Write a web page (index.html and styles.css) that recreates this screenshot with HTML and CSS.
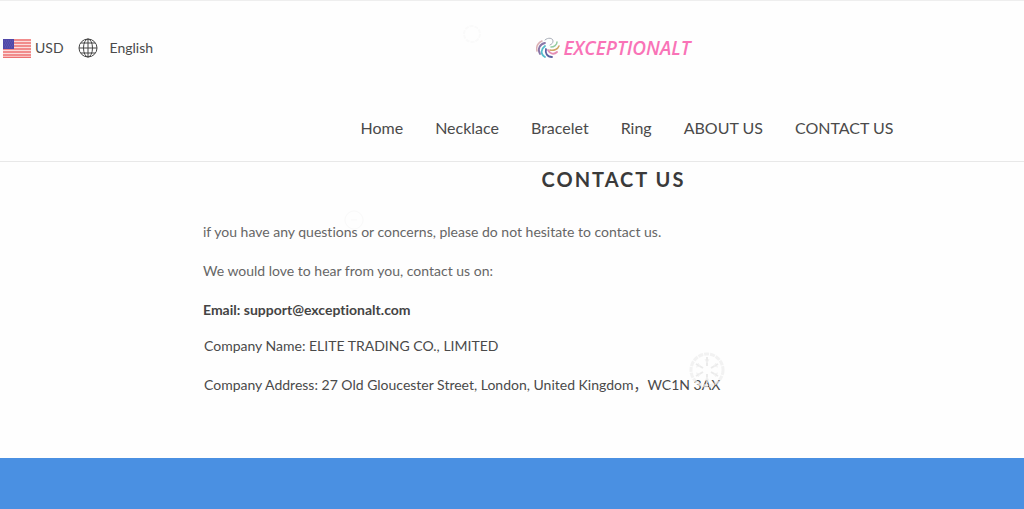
FILE: index.html
```html
<!DOCTYPE html>
<html lang="en">
<head>
  <meta charset="UTF-8">
  <meta name="viewport" content="width=device-width, initial-scale=1">
  <title>Contact Us</title>
  <link rel="stylesheet" href="styles.css">
</head>
<body>

  <header class="header">
    <div class="top-bar">
      <div class="switchers">
        <button class="switcher currency">
          <svg class="flag" viewBox="0 0 28 19" aria-hidden="true">
            <rect width="28" height="19" rx="1" fill="#fbdedd"/>
            <path d="M0 1h28M0 4h28M0 7h28M0 10h28M0 13h28M0 16h28M0 18.500h28" stroke="#ee7172" stroke-width="1.500"/>
            <rect width="11" height="10" fill="#5048a8"/>
            <path d="M1 2h9M2 4h8M1 6h9M2 8h8" stroke="#7770c0" stroke-width=".6" stroke-dasharray="1 1"/>
          </svg>
          <span>USD</span>
        </button>
        <button class="switcher language">
          <svg class="globe" viewBox="0 0 20 20" fill="none" stroke="#444" aria-hidden="true">
            <circle cx="10" cy="10" r="9"/>
            <ellipse cx="10" cy="10" rx="4.500" ry="9"/>
            <path d="M10 1v18M1 10h18M3 5h14M3 15h14"/>
          </svg>
          <span>English</span>
        </button>
      </div>
      <a class="logo" href="#">
        <svg class="swirl" viewBox="0 0 24 22" fill="none" stroke-linecap="round" aria-hidden="true">
          <path d="M6 4C2 6 0 10 1 14" stroke="#dcb0b4" stroke-width="1.500"/>
          <path d="M9 6C4 7 1 12 4 17" stroke="#8a76a8" stroke-width="1.800"/>
          <path d="M9 9c-4 3-5 8 0 11" stroke="#55bccb" stroke-width="1.800"/>
          <path d="M10 12c-1 4 1 8 6 8" stroke="#5960a0" stroke-width="1.800"/>
          <path d="M12 13c2 4 6 5 9 2" stroke="#e58fb5" stroke-width="1.800"/>
          <path d="M14 13c4 1 8-1 9-4" stroke="#cfa564" stroke-width="1.500"/>
          <path d="M15 10c3 0 6-2 6-5" stroke="#93cba0" stroke-width="1.500"/>
          <path d="M9 3c3-3 8-2 8 1 0 2-1 3-3 4" stroke="#a9aeb8" stroke-width="1"/>
        </svg>
        <span>EXCEPTIONALT</span>
      </a>
    </div>

    <nav class="nav">
      <a href="#">Home</a>
      <a href="#">Necklace</a>
      <a href="#">Bracelet</a>
      <a href="#">Ring</a>
      <a href="#">ABOUT US</a>
      <a href="#">CONTACT US</a>
    </nav>
  </header>

  <main class="content">
    <h1>CONTACT US</h1>
    <p>if you have any questions or concerns, please do not hesitate to contact us.</p>
    <p>We would love to hear from you, contact us on:</p>
    <p class="email">Email: support@exceptionalt.com</p>
    <div class="company">
      <p>Company Name: ELITE TRADING CO., LIMITED</p>
      <p>Company Address: 27 Old Gloucester Street, London, United Kingdom，WC1N 3AX</p>
    </div>
  </main>

  <footer class="footer"></footer>

  <!-- falling snow -->
  <svg class="snow snow-large" viewBox="0 0 36 36" fill="none" stroke="#eee" aria-hidden="true">
    <circle cx="18" cy="18" r="16" stroke-width="3" stroke-dasharray="5 1"/>
    <path d="M18 14V5M18 22v9M14 16L7 12M22 20l7 4M14 20l-7 4M22 16l7-4" stroke="#e4e4e4" stroke-width="2"/>
    <path d="M16 7l2 4 2-4M16 29l2-4 2 4M7 15l4-1-2-3M29 21l-4 1 2 3M7 21l4 1-2 3M29 15l-4-1 2-3"/>
  </svg>
  <svg class="snow snow-top" viewBox="0 0 20 20" fill="none" stroke="#fafafa" aria-hidden="true">
    <circle cx="10" cy="10" r="8" stroke-width="2" stroke-dasharray="4 1"/>
  </svg>
  <svg class="snow snow-left" viewBox="0 0 20 20" fill="none" stroke="#f9f9f9" aria-hidden="true">
    <circle cx="10" cy="10" r="9"/>
    <path d="M7 10h6"/>
  </svg>

</body>
</html>
```

FILE: styles.css
```css
* {
  box-sizing: border-box;
}

body {
  margin: 0;
  min-height: 100vh;
  display: flex;
  flex-direction: column;
  position: relative;
  background: #fefefe;
  color: #4a4a4a;
  font-family: Lato, "Noto Sans CJK SC", sans-serif;
  font-size: 14px;
  font-variant-ligatures: none;
  line-height: 20px;
}

a {
  color: inherit;
  text-decoration: none;
}

.header {
  border-top: 1px solid #eee;
  border-bottom: 1px solid #e8e8e8;
}

.top-bar {
  display: grid;
  grid-template-columns: 203px 1fr;
  align-items: center;
  height: 94px;
}

.switchers {
  display: flex;
  gap: 14px;
  padding-left: 3px;
}

.switcher {
  display: flex;
  align-items: center;
  padding: 0;
  border: none;
  background: none;
  color: inherit;
  font: inherit;
  cursor: pointer;
}

.currency {
  gap: 4px;
}

.language {
  gap: 12px;
}

.flag {
  width: 28px;
  height: 19px;
}

.globe {
  width: 20px;
  height: 20px;
}

.logo {
  display: flex;
  align-items: center;
  justify-self: center;
  gap: 3px;
  color: #f973b7;
  font-family: "Open Sans", sans-serif;
  font-size: 19px;
  font-style: italic;
  font-weight: 600;
}

.swirl {
  width: 24px;
  height: 22px;
}

.nav {
  display: flex;
  justify-content: center;
  gap: 32px;
  padding: 22px 0 22px 230px;
  font-size: 16px;
  line-height: 22px;
}

.content {
  flex: 1;
  padding-left: 203px;
}

.content h1 {
  margin: 5px 0 31px;
  color: #3a3a3a;
  font-size: 20px;
  line-height: 24px;
  letter-spacing: 2px;
  text-align: center;
}

.content p {
  margin: 0 0 19px;
  color: #666;
}

.content .email {
  margin-bottom: 16px;
  color: #444;
  font-weight: bold;
}

.content .company p {
  padding-left: 1px;
  color: #4a4a4a;
}

.footer {
  height: 51px;
  background: #4a90e2;
}

.snow {
  position: absolute;
  pointer-events: none;
}

.snow-large {
  top: 352px;
  left: 689px;
  width: 36px;
  opacity: 0.7;
}

.snow-top {
  top: 24px;
  left: 462px;
  width: 20px;
}

.snow-left {
  top: 210px;
  left: 344px;
  width: 20px;
}
```
